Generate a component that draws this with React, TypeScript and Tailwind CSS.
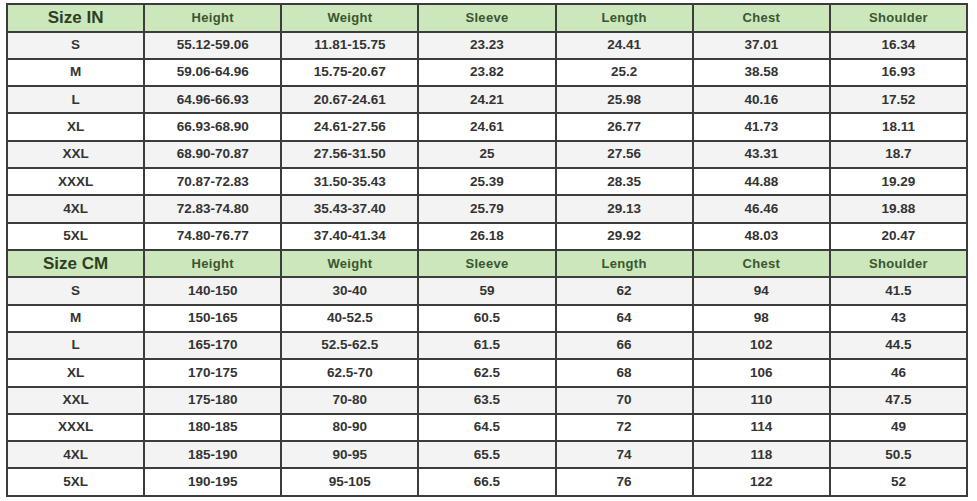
const COLS = ["Height", "Weight", "Sleeve", "Length", "Chest", "Shoulder"];

const IN_ROWS = [
  ["S", "55.12-59.06", "11.81-15.75", "23.23", "24.41", "37.01", "16.34"],
  ["M", "59.06-64.96", "15.75-20.67", "23.82", "25.2", "38.58", "16.93"],
  ["L", "64.96-66.93", "20.67-24.61", "24.21", "25.98", "40.16", "17.52"],
  ["XL", "66.93-68.90", "24.61-27.56", "24.61", "26.77", "41.73", "18.11"],
  ["XXL", "68.90-70.87", "27.56-31.50", "25", "27.56", "43.31", "18.7"],
  ["XXXL", "70.87-72.83", "31.50-35.43", "25.39", "28.35", "44.88", "19.29"],
  ["4XL", "72.83-74.80", "35.43-37.40", "25.79", "29.13", "46.46", "19.88"],
  ["5XL", "74.80-76.77", "37.40-41.34", "26.18", "29.92", "48.03", "20.47"],
];

const CM_ROWS = [
  ["S", "140-150", "30-40", "59", "62", "94", "41.5"],
  ["M", "150-165", "40-52.5", "60.5", "64", "98", "43"],
  ["L", "165-170", "52.5-62.5", "61.5", "66", "102", "44.5"],
  ["XL", "170-175", "62.5-70", "62.5", "68", "106", "46"],
  ["XXL", "175-180", "70-80", "63.5", "70", "110", "47.5"],
  ["XXXL", "180-185", "80-90", "64.5", "72", "114", "49"],
  ["4XL", "185-190", "90-95", "65.5", "74", "118", "50.5"],
  ["5XL", "190-195", "95-105", "66.5", "76", "122", "52"],
];

function Header({ label }: { label: string }) {
  return (
    <tr className="h-[27.3px] bg-[#cbe7bb]">
      <th className="border-2 border-[#3c3c3c] text-[17px] font-bold text-[#2c3f24]">{label}</th>
      {COLS.map((c) => (
        <th key={c} className="border-2 border-[#3c3c3c] text-[13px] font-bold text-[#3a5530] tracking-[0.3px]">
          {c}
        </th>
      ))}
    </tr>
  );
}

function Rows({ rows }: { rows: string[][] }) {
  return (
    <>
      {rows.map((r, i) => (
        <tr key={r[0]} className={`h-[27.3px] ${i % 2 === 0 ? "bg-[#f3f3f3]" : "bg-white"}`}>
          {r.map((v, j) => (
            <td key={j} className="border-2 border-[#3c3c3c] text-center text-[13.5px] font-bold text-[#333333]">
              {v}
            </td>
          ))}
        </tr>
      ))}
    </>
  );
}

export default function App() {
  return (
    <div className="w-[977px] h-[501px] bg-white pt-[3px] pl-[6px] font-['Liberation_Sans',Arial,sans-serif]">
      <table className="w-[962px] table-fixed border-collapse">
        <tbody>
          <Header label="Size IN" />
          <Rows rows={IN_ROWS} />
          <Header label="Size CM" />
          <Rows rows={CM_ROWS} />
        </tbody>
      </table>
    </div>
  );
}
